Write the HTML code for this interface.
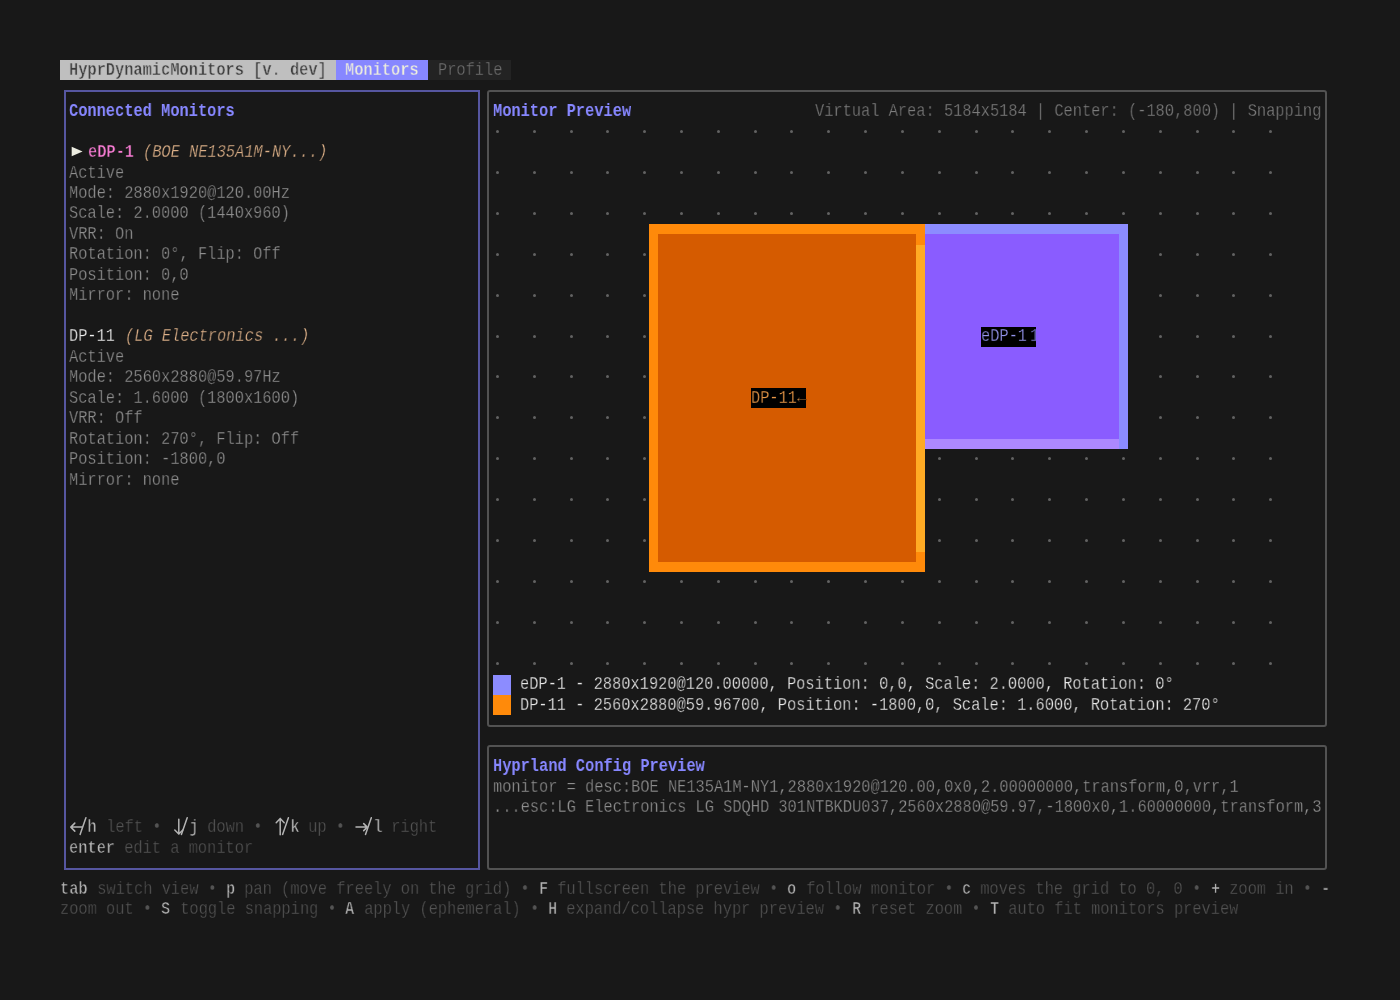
<!DOCTYPE html>
<html><head><meta charset="utf-8"><style>
html,body{margin:0;padding:0;}
body{width:1400px;height:1000px;background:#181818;position:relative;overflow:hidden;font-family:"Liberation Mono",monospace;}
.t{position:absolute;white-space:pre;font-size:19.0px;line-height:20.467px;height:20.467px;transform:scaleX(0.80741);transform-origin:0 0;will-change:transform;-webkit-text-stroke:0.3px #181818;}
</style></head><body>
<div style="position:absolute;left:60.10px;top:59.99px;width:276.18px;height:20.36px;background:#bfbfbf;"></div>
<div class="t" style="left:69.31px;top:60.20px;color:#3c3c3c;-webkit-text-stroke-color:#bfbfbf;font-weight:bold;-webkit-text-stroke-width:0;-webkit-text-stroke-width:0.5px;">HyprDynamicMonitors [v. dev]</div>
<div style="position:absolute;left:336.28px;top:59.99px;width:92.06px;height:20.36px;background:#8787ff;"></div>
<div class="t" style="left:345.49px;top:60.20px;color:#eeeedd;-webkit-text-stroke-color:#8787ff;font-weight:bold;-webkit-text-stroke-width:0;-webkit-text-stroke-width:0.4px;">Monitors</div>
<div style="position:absolute;left:428.34px;top:59.99px;width:82.85px;height:20.36px;background:#232323;"></div>
<div class="t" style="left:437.55px;top:60.20px;color:#6e6e6e;-webkit-text-stroke-color:#232323;">Profile</div>
<div style="position:absolute;left:63.70px;top:90.20px;width:416.27px;height:779.75px;border:2px solid #5656a0;box-sizing:border-box;border-radius:0px"></div>
<div class="t" style="left:69.31px;top:101.13px;color:#8787ff;font-weight:bold;-webkit-text-stroke-width:0;">Connected Monitors</div>
<svg style="position:absolute;left:0;top:0" width="100" height="170"><polygon points="71.7,146.8 71.7,156.2 82.6,151.5" fill="#ecece0"/></svg>
<div class="t" style="left:87.72px;top:142.07px;color:#fa7ed6;font-weight:bold;-webkit-text-stroke-width:0;-webkit-text-stroke-width:0.5px;">eDP-1</div>
<div class="t" style="left:142.95px;top:142.07px;color:#dcb088;font-style:italic;">(BOE NE135A1M-NY...)</div>
<div class="t" style="left:69.31px;top:162.53px;color:#8e8e8e;">Active</div>
<div class="t" style="left:69.31px;top:183.00px;color:#8e8e8e;">Mode: 2880x1920@120.00Hz</div>
<div class="t" style="left:69.31px;top:203.47px;color:#8e8e8e;">Scale: 2.0000 (1440x960)</div>
<div class="t" style="left:69.31px;top:223.94px;color:#8e8e8e;">VRR: On</div>
<div class="t" style="left:69.31px;top:244.40px;color:#8e8e8e;">Rotation: 0°, Flip: Off</div>
<div class="t" style="left:69.31px;top:264.87px;color:#8e8e8e;">Position: 0,0</div>
<div class="t" style="left:69.31px;top:285.34px;color:#8e8e8e;">Mirror: none</div>
<div class="t" style="left:69.31px;top:326.27px;color:#eeeeee;">DP-11</div>
<div class="t" style="left:124.54px;top:326.27px;color:#dcb088;font-style:italic;">(LG Electronics ...)</div>
<div class="t" style="left:69.31px;top:346.74px;color:#8e8e8e;">Active</div>
<div class="t" style="left:69.31px;top:367.20px;color:#8e8e8e;">Mode: 2560x2880@59.97Hz</div>
<div class="t" style="left:69.31px;top:387.67px;color:#8e8e8e;">Scale: 1.6000 (1800x1600)</div>
<div class="t" style="left:69.31px;top:408.14px;color:#8e8e8e;">VRR: Off</div>
<div class="t" style="left:69.31px;top:428.61px;color:#8e8e8e;">Rotation: 270°, Flip: Off</div>
<div class="t" style="left:69.31px;top:449.07px;color:#8e8e8e;">Position: -1800,0</div>
<div class="t" style="left:69.31px;top:469.54px;color:#8e8e8e;">Mirror: none</div>
<div class="t" style="left:69.31px;top:817.48px;color:#b4b4b4;font-weight:bold;-webkit-text-stroke-width:0;-webkit-text-stroke-width:0.7px;">  h</div>
<div class="t" style="left:96.92px;top:817.48px;color:#535353;"> left • </div>
<div class="t" style="left:170.57px;top:817.48px;color:#b4b4b4;font-weight:bold;-webkit-text-stroke-width:0;-webkit-text-stroke-width:0.7px;">  j</div>
<div class="t" style="left:198.19px;top:817.48px;color:#535353;"> down • </div>
<div class="t" style="left:271.84px;top:817.48px;color:#b4b4b4;font-weight:bold;-webkit-text-stroke-width:0;-webkit-text-stroke-width:0.7px;">  k</div>
<div class="t" style="left:299.46px;top:817.48px;color:#535353;"> up • </div>
<div class="t" style="left:354.69px;top:817.48px;color:#b4b4b4;font-weight:bold;-webkit-text-stroke-width:0;-webkit-text-stroke-width:0.7px;">  l</div>
<div class="t" style="left:382.31px;top:817.48px;color:#535353;"> right</div>
<svg style="position:absolute;left:0;top:0" width="1400" height="1000"><path d="M70.8 827.1 H82.3 M74.8 823.1 L70.8 827.1 L74.8 831.1" fill="none" stroke="#b4b4b4" stroke-width="1.5" stroke-linecap="round" stroke-linejoin="round"/><path d="M178.8 819.3 V834.1 M174.8 830.0 L178.8 834.1 L182.8 830.0" fill="none" stroke="#b4b4b4" stroke-width="1.5" stroke-linecap="round" stroke-linejoin="round"/><path d="M280.2 834.8 V818.6 M276.2 822.7 L280.2 818.6 L284.2 822.7" fill="none" stroke="#b4b4b4" stroke-width="1.5" stroke-linecap="round" stroke-linejoin="round"/><path d="M356.0 827.1 H367.2 M363.7 823.6 L367.2 827.1 L363.7 830.6" fill="none" stroke="#b4b4b4" stroke-width="1.5" stroke-linecap="round" stroke-linejoin="round"/><path d="M80.1 834.4 L85.9 817.8" fill="none" stroke="#b4b4b4" stroke-width="1.5" stroke-linecap="round" stroke-linejoin="round"/><path d="M181.4 834.4 L187.2 817.8" fill="none" stroke="#b4b4b4" stroke-width="1.5" stroke-linecap="round" stroke-linejoin="round"/><path d="M282.6 834.4 L288.4 817.8" fill="none" stroke="#b4b4b4" stroke-width="1.5" stroke-linecap="round" stroke-linejoin="round"/><path d="M365.5 834.4 L371.3 817.8" fill="none" stroke="#b4b4b4" stroke-width="1.5" stroke-linecap="round" stroke-linejoin="round"/></svg>
<div class="t" style="left:69.31px;top:837.95px;color:#b4b4b4;font-weight:bold;-webkit-text-stroke-width:0;-webkit-text-stroke-width:0.7px;">enter</div>
<div class="t" style="left:115.34px;top:837.95px;color:#535353;"> edit a monitor</div>
<div style="position:absolute;left:487.18px;top:90.20px;width:839.75px;height:636.48px;border:2px solid #525252;box-sizing:border-box;border-radius:3px"></div>
<div class="t" style="left:492.78px;top:101.13px;color:#8787ff;font-weight:bold;-webkit-text-stroke-width:0;">Monitor Preview</div>
<div class="t" style="left:814.99px;top:101.13px;color:#7c7c7c;">Virtual Area: 5184x5184 | Center: (-180,800) | Snapping</div>
<div style="position:absolute;left:496px;top:130px;width:3px;height:3px;border-radius:50%;background:#626262"></div>
<div style="position:absolute;left:533px;top:130px;width:3px;height:3px;border-radius:50%;background:#626262"></div>
<div style="position:absolute;left:570px;top:130px;width:3px;height:3px;border-radius:50%;background:#626262"></div>
<div style="position:absolute;left:606px;top:130px;width:3px;height:3px;border-radius:50%;background:#626262"></div>
<div style="position:absolute;left:643px;top:130px;width:3px;height:3px;border-radius:50%;background:#626262"></div>
<div style="position:absolute;left:680px;top:130px;width:3px;height:3px;border-radius:50%;background:#626262"></div>
<div style="position:absolute;left:717px;top:130px;width:3px;height:3px;border-radius:50%;background:#626262"></div>
<div style="position:absolute;left:754px;top:130px;width:3px;height:3px;border-radius:50%;background:#626262"></div>
<div style="position:absolute;left:790px;top:130px;width:3px;height:3px;border-radius:50%;background:#626262"></div>
<div style="position:absolute;left:827px;top:130px;width:3px;height:3px;border-radius:50%;background:#626262"></div>
<div style="position:absolute;left:864px;top:130px;width:3px;height:3px;border-radius:50%;background:#626262"></div>
<div style="position:absolute;left:901px;top:130px;width:3px;height:3px;border-radius:50%;background:#626262"></div>
<div style="position:absolute;left:938px;top:130px;width:3px;height:3px;border-radius:50%;background:#626262"></div>
<div style="position:absolute;left:975px;top:130px;width:3px;height:3px;border-radius:50%;background:#626262"></div>
<div style="position:absolute;left:1011px;top:130px;width:3px;height:3px;border-radius:50%;background:#626262"></div>
<div style="position:absolute;left:1048px;top:130px;width:3px;height:3px;border-radius:50%;background:#626262"></div>
<div style="position:absolute;left:1085px;top:130px;width:3px;height:3px;border-radius:50%;background:#626262"></div>
<div style="position:absolute;left:1122px;top:130px;width:3px;height:3px;border-radius:50%;background:#626262"></div>
<div style="position:absolute;left:1159px;top:130px;width:3px;height:3px;border-radius:50%;background:#626262"></div>
<div style="position:absolute;left:1196px;top:130px;width:3px;height:3px;border-radius:50%;background:#626262"></div>
<div style="position:absolute;left:1232px;top:130px;width:3px;height:3px;border-radius:50%;background:#626262"></div>
<div style="position:absolute;left:1269px;top:130px;width:3px;height:3px;border-radius:50%;background:#626262"></div>
<div style="position:absolute;left:496px;top:171px;width:3px;height:3px;border-radius:50%;background:#626262"></div>
<div style="position:absolute;left:533px;top:171px;width:3px;height:3px;border-radius:50%;background:#626262"></div>
<div style="position:absolute;left:570px;top:171px;width:3px;height:3px;border-radius:50%;background:#626262"></div>
<div style="position:absolute;left:606px;top:171px;width:3px;height:3px;border-radius:50%;background:#626262"></div>
<div style="position:absolute;left:643px;top:171px;width:3px;height:3px;border-radius:50%;background:#626262"></div>
<div style="position:absolute;left:680px;top:171px;width:3px;height:3px;border-radius:50%;background:#626262"></div>
<div style="position:absolute;left:717px;top:171px;width:3px;height:3px;border-radius:50%;background:#626262"></div>
<div style="position:absolute;left:754px;top:171px;width:3px;height:3px;border-radius:50%;background:#626262"></div>
<div style="position:absolute;left:790px;top:171px;width:3px;height:3px;border-radius:50%;background:#626262"></div>
<div style="position:absolute;left:827px;top:171px;width:3px;height:3px;border-radius:50%;background:#626262"></div>
<div style="position:absolute;left:864px;top:171px;width:3px;height:3px;border-radius:50%;background:#626262"></div>
<div style="position:absolute;left:901px;top:171px;width:3px;height:3px;border-radius:50%;background:#626262"></div>
<div style="position:absolute;left:938px;top:171px;width:3px;height:3px;border-radius:50%;background:#626262"></div>
<div style="position:absolute;left:975px;top:171px;width:3px;height:3px;border-radius:50%;background:#626262"></div>
<div style="position:absolute;left:1011px;top:171px;width:3px;height:3px;border-radius:50%;background:#626262"></div>
<div style="position:absolute;left:1048px;top:171px;width:3px;height:3px;border-radius:50%;background:#626262"></div>
<div style="position:absolute;left:1085px;top:171px;width:3px;height:3px;border-radius:50%;background:#626262"></div>
<div style="position:absolute;left:1122px;top:171px;width:3px;height:3px;border-radius:50%;background:#626262"></div>
<div style="position:absolute;left:1159px;top:171px;width:3px;height:3px;border-radius:50%;background:#626262"></div>
<div style="position:absolute;left:1196px;top:171px;width:3px;height:3px;border-radius:50%;background:#626262"></div>
<div style="position:absolute;left:1232px;top:171px;width:3px;height:3px;border-radius:50%;background:#626262"></div>
<div style="position:absolute;left:1269px;top:171px;width:3px;height:3px;border-radius:50%;background:#626262"></div>
<div style="position:absolute;left:496px;top:212px;width:3px;height:3px;border-radius:50%;background:#626262"></div>
<div style="position:absolute;left:533px;top:212px;width:3px;height:3px;border-radius:50%;background:#626262"></div>
<div style="position:absolute;left:570px;top:212px;width:3px;height:3px;border-radius:50%;background:#626262"></div>
<div style="position:absolute;left:606px;top:212px;width:3px;height:3px;border-radius:50%;background:#626262"></div>
<div style="position:absolute;left:643px;top:212px;width:3px;height:3px;border-radius:50%;background:#626262"></div>
<div style="position:absolute;left:680px;top:212px;width:3px;height:3px;border-radius:50%;background:#626262"></div>
<div style="position:absolute;left:717px;top:212px;width:3px;height:3px;border-radius:50%;background:#626262"></div>
<div style="position:absolute;left:754px;top:212px;width:3px;height:3px;border-radius:50%;background:#626262"></div>
<div style="position:absolute;left:790px;top:212px;width:3px;height:3px;border-radius:50%;background:#626262"></div>
<div style="position:absolute;left:827px;top:212px;width:3px;height:3px;border-radius:50%;background:#626262"></div>
<div style="position:absolute;left:864px;top:212px;width:3px;height:3px;border-radius:50%;background:#626262"></div>
<div style="position:absolute;left:901px;top:212px;width:3px;height:3px;border-radius:50%;background:#626262"></div>
<div style="position:absolute;left:938px;top:212px;width:3px;height:3px;border-radius:50%;background:#626262"></div>
<div style="position:absolute;left:975px;top:212px;width:3px;height:3px;border-radius:50%;background:#626262"></div>
<div style="position:absolute;left:1011px;top:212px;width:3px;height:3px;border-radius:50%;background:#626262"></div>
<div style="position:absolute;left:1048px;top:212px;width:3px;height:3px;border-radius:50%;background:#626262"></div>
<div style="position:absolute;left:1085px;top:212px;width:3px;height:3px;border-radius:50%;background:#626262"></div>
<div style="position:absolute;left:1122px;top:212px;width:3px;height:3px;border-radius:50%;background:#626262"></div>
<div style="position:absolute;left:1159px;top:212px;width:3px;height:3px;border-radius:50%;background:#626262"></div>
<div style="position:absolute;left:1196px;top:212px;width:3px;height:3px;border-radius:50%;background:#626262"></div>
<div style="position:absolute;left:1232px;top:212px;width:3px;height:3px;border-radius:50%;background:#626262"></div>
<div style="position:absolute;left:1269px;top:212px;width:3px;height:3px;border-radius:50%;background:#626262"></div>
<div style="position:absolute;left:496px;top:253px;width:3px;height:3px;border-radius:50%;background:#626262"></div>
<div style="position:absolute;left:533px;top:253px;width:3px;height:3px;border-radius:50%;background:#626262"></div>
<div style="position:absolute;left:570px;top:253px;width:3px;height:3px;border-radius:50%;background:#626262"></div>
<div style="position:absolute;left:606px;top:253px;width:3px;height:3px;border-radius:50%;background:#626262"></div>
<div style="position:absolute;left:643px;top:253px;width:3px;height:3px;border-radius:50%;background:#626262"></div>
<div style="position:absolute;left:680px;top:253px;width:3px;height:3px;border-radius:50%;background:#626262"></div>
<div style="position:absolute;left:717px;top:253px;width:3px;height:3px;border-radius:50%;background:#626262"></div>
<div style="position:absolute;left:754px;top:253px;width:3px;height:3px;border-radius:50%;background:#626262"></div>
<div style="position:absolute;left:790px;top:253px;width:3px;height:3px;border-radius:50%;background:#626262"></div>
<div style="position:absolute;left:827px;top:253px;width:3px;height:3px;border-radius:50%;background:#626262"></div>
<div style="position:absolute;left:864px;top:253px;width:3px;height:3px;border-radius:50%;background:#626262"></div>
<div style="position:absolute;left:901px;top:253px;width:3px;height:3px;border-radius:50%;background:#626262"></div>
<div style="position:absolute;left:938px;top:253px;width:3px;height:3px;border-radius:50%;background:#626262"></div>
<div style="position:absolute;left:975px;top:253px;width:3px;height:3px;border-radius:50%;background:#626262"></div>
<div style="position:absolute;left:1011px;top:253px;width:3px;height:3px;border-radius:50%;background:#626262"></div>
<div style="position:absolute;left:1048px;top:253px;width:3px;height:3px;border-radius:50%;background:#626262"></div>
<div style="position:absolute;left:1085px;top:253px;width:3px;height:3px;border-radius:50%;background:#626262"></div>
<div style="position:absolute;left:1122px;top:253px;width:3px;height:3px;border-radius:50%;background:#626262"></div>
<div style="position:absolute;left:1159px;top:253px;width:3px;height:3px;border-radius:50%;background:#626262"></div>
<div style="position:absolute;left:1196px;top:253px;width:3px;height:3px;border-radius:50%;background:#626262"></div>
<div style="position:absolute;left:1232px;top:253px;width:3px;height:3px;border-radius:50%;background:#626262"></div>
<div style="position:absolute;left:1269px;top:253px;width:3px;height:3px;border-radius:50%;background:#626262"></div>
<div style="position:absolute;left:496px;top:294px;width:3px;height:3px;border-radius:50%;background:#626262"></div>
<div style="position:absolute;left:533px;top:294px;width:3px;height:3px;border-radius:50%;background:#626262"></div>
<div style="position:absolute;left:570px;top:294px;width:3px;height:3px;border-radius:50%;background:#626262"></div>
<div style="position:absolute;left:606px;top:294px;width:3px;height:3px;border-radius:50%;background:#626262"></div>
<div style="position:absolute;left:643px;top:294px;width:3px;height:3px;border-radius:50%;background:#626262"></div>
<div style="position:absolute;left:680px;top:294px;width:3px;height:3px;border-radius:50%;background:#626262"></div>
<div style="position:absolute;left:717px;top:294px;width:3px;height:3px;border-radius:50%;background:#626262"></div>
<div style="position:absolute;left:754px;top:294px;width:3px;height:3px;border-radius:50%;background:#626262"></div>
<div style="position:absolute;left:790px;top:294px;width:3px;height:3px;border-radius:50%;background:#626262"></div>
<div style="position:absolute;left:827px;top:294px;width:3px;height:3px;border-radius:50%;background:#626262"></div>
<div style="position:absolute;left:864px;top:294px;width:3px;height:3px;border-radius:50%;background:#626262"></div>
<div style="position:absolute;left:901px;top:294px;width:3px;height:3px;border-radius:50%;background:#626262"></div>
<div style="position:absolute;left:938px;top:294px;width:3px;height:3px;border-radius:50%;background:#626262"></div>
<div style="position:absolute;left:975px;top:294px;width:3px;height:3px;border-radius:50%;background:#626262"></div>
<div style="position:absolute;left:1011px;top:294px;width:3px;height:3px;border-radius:50%;background:#626262"></div>
<div style="position:absolute;left:1048px;top:294px;width:3px;height:3px;border-radius:50%;background:#626262"></div>
<div style="position:absolute;left:1085px;top:294px;width:3px;height:3px;border-radius:50%;background:#626262"></div>
<div style="position:absolute;left:1122px;top:294px;width:3px;height:3px;border-radius:50%;background:#626262"></div>
<div style="position:absolute;left:1159px;top:294px;width:3px;height:3px;border-radius:50%;background:#626262"></div>
<div style="position:absolute;left:1196px;top:294px;width:3px;height:3px;border-radius:50%;background:#626262"></div>
<div style="position:absolute;left:1232px;top:294px;width:3px;height:3px;border-radius:50%;background:#626262"></div>
<div style="position:absolute;left:1269px;top:294px;width:3px;height:3px;border-radius:50%;background:#626262"></div>
<div style="position:absolute;left:496px;top:335px;width:3px;height:3px;border-radius:50%;background:#626262"></div>
<div style="position:absolute;left:533px;top:335px;width:3px;height:3px;border-radius:50%;background:#626262"></div>
<div style="position:absolute;left:570px;top:335px;width:3px;height:3px;border-radius:50%;background:#626262"></div>
<div style="position:absolute;left:606px;top:335px;width:3px;height:3px;border-radius:50%;background:#626262"></div>
<div style="position:absolute;left:643px;top:335px;width:3px;height:3px;border-radius:50%;background:#626262"></div>
<div style="position:absolute;left:680px;top:335px;width:3px;height:3px;border-radius:50%;background:#626262"></div>
<div style="position:absolute;left:717px;top:335px;width:3px;height:3px;border-radius:50%;background:#626262"></div>
<div style="position:absolute;left:754px;top:335px;width:3px;height:3px;border-radius:50%;background:#626262"></div>
<div style="position:absolute;left:790px;top:335px;width:3px;height:3px;border-radius:50%;background:#626262"></div>
<div style="position:absolute;left:827px;top:335px;width:3px;height:3px;border-radius:50%;background:#626262"></div>
<div style="position:absolute;left:864px;top:335px;width:3px;height:3px;border-radius:50%;background:#626262"></div>
<div style="position:absolute;left:901px;top:335px;width:3px;height:3px;border-radius:50%;background:#626262"></div>
<div style="position:absolute;left:938px;top:335px;width:3px;height:3px;border-radius:50%;background:#626262"></div>
<div style="position:absolute;left:975px;top:335px;width:3px;height:3px;border-radius:50%;background:#626262"></div>
<div style="position:absolute;left:1011px;top:335px;width:3px;height:3px;border-radius:50%;background:#626262"></div>
<div style="position:absolute;left:1048px;top:335px;width:3px;height:3px;border-radius:50%;background:#626262"></div>
<div style="position:absolute;left:1085px;top:335px;width:3px;height:3px;border-radius:50%;background:#626262"></div>
<div style="position:absolute;left:1122px;top:335px;width:3px;height:3px;border-radius:50%;background:#626262"></div>
<div style="position:absolute;left:1159px;top:335px;width:3px;height:3px;border-radius:50%;background:#626262"></div>
<div style="position:absolute;left:1196px;top:335px;width:3px;height:3px;border-radius:50%;background:#626262"></div>
<div style="position:absolute;left:1232px;top:335px;width:3px;height:3px;border-radius:50%;background:#626262"></div>
<div style="position:absolute;left:1269px;top:335px;width:3px;height:3px;border-radius:50%;background:#626262"></div>
<div style="position:absolute;left:496px;top:375px;width:3px;height:3px;border-radius:50%;background:#626262"></div>
<div style="position:absolute;left:533px;top:375px;width:3px;height:3px;border-radius:50%;background:#626262"></div>
<div style="position:absolute;left:570px;top:375px;width:3px;height:3px;border-radius:50%;background:#626262"></div>
<div style="position:absolute;left:606px;top:375px;width:3px;height:3px;border-radius:50%;background:#626262"></div>
<div style="position:absolute;left:643px;top:375px;width:3px;height:3px;border-radius:50%;background:#626262"></div>
<div style="position:absolute;left:680px;top:375px;width:3px;height:3px;border-radius:50%;background:#626262"></div>
<div style="position:absolute;left:717px;top:375px;width:3px;height:3px;border-radius:50%;background:#626262"></div>
<div style="position:absolute;left:754px;top:375px;width:3px;height:3px;border-radius:50%;background:#626262"></div>
<div style="position:absolute;left:790px;top:375px;width:3px;height:3px;border-radius:50%;background:#626262"></div>
<div style="position:absolute;left:827px;top:375px;width:3px;height:3px;border-radius:50%;background:#626262"></div>
<div style="position:absolute;left:864px;top:375px;width:3px;height:3px;border-radius:50%;background:#626262"></div>
<div style="position:absolute;left:901px;top:375px;width:3px;height:3px;border-radius:50%;background:#626262"></div>
<div style="position:absolute;left:938px;top:375px;width:3px;height:3px;border-radius:50%;background:#626262"></div>
<div style="position:absolute;left:975px;top:375px;width:3px;height:3px;border-radius:50%;background:#626262"></div>
<div style="position:absolute;left:1011px;top:375px;width:3px;height:3px;border-radius:50%;background:#626262"></div>
<div style="position:absolute;left:1048px;top:375px;width:3px;height:3px;border-radius:50%;background:#626262"></div>
<div style="position:absolute;left:1085px;top:375px;width:3px;height:3px;border-radius:50%;background:#626262"></div>
<div style="position:absolute;left:1122px;top:375px;width:3px;height:3px;border-radius:50%;background:#626262"></div>
<div style="position:absolute;left:1159px;top:375px;width:3px;height:3px;border-radius:50%;background:#626262"></div>
<div style="position:absolute;left:1196px;top:375px;width:3px;height:3px;border-radius:50%;background:#626262"></div>
<div style="position:absolute;left:1232px;top:375px;width:3px;height:3px;border-radius:50%;background:#626262"></div>
<div style="position:absolute;left:1269px;top:375px;width:3px;height:3px;border-radius:50%;background:#626262"></div>
<div style="position:absolute;left:496px;top:416px;width:3px;height:3px;border-radius:50%;background:#626262"></div>
<div style="position:absolute;left:533px;top:416px;width:3px;height:3px;border-radius:50%;background:#626262"></div>
<div style="position:absolute;left:570px;top:416px;width:3px;height:3px;border-radius:50%;background:#626262"></div>
<div style="position:absolute;left:606px;top:416px;width:3px;height:3px;border-radius:50%;background:#626262"></div>
<div style="position:absolute;left:643px;top:416px;width:3px;height:3px;border-radius:50%;background:#626262"></div>
<div style="position:absolute;left:680px;top:416px;width:3px;height:3px;border-radius:50%;background:#626262"></div>
<div style="position:absolute;left:717px;top:416px;width:3px;height:3px;border-radius:50%;background:#626262"></div>
<div style="position:absolute;left:754px;top:416px;width:3px;height:3px;border-radius:50%;background:#626262"></div>
<div style="position:absolute;left:790px;top:416px;width:3px;height:3px;border-radius:50%;background:#626262"></div>
<div style="position:absolute;left:827px;top:416px;width:3px;height:3px;border-radius:50%;background:#626262"></div>
<div style="position:absolute;left:864px;top:416px;width:3px;height:3px;border-radius:50%;background:#626262"></div>
<div style="position:absolute;left:901px;top:416px;width:3px;height:3px;border-radius:50%;background:#626262"></div>
<div style="position:absolute;left:938px;top:416px;width:3px;height:3px;border-radius:50%;background:#626262"></div>
<div style="position:absolute;left:975px;top:416px;width:3px;height:3px;border-radius:50%;background:#626262"></div>
<div style="position:absolute;left:1011px;top:416px;width:3px;height:3px;border-radius:50%;background:#626262"></div>
<div style="position:absolute;left:1048px;top:416px;width:3px;height:3px;border-radius:50%;background:#626262"></div>
<div style="position:absolute;left:1085px;top:416px;width:3px;height:3px;border-radius:50%;background:#626262"></div>
<div style="position:absolute;left:1122px;top:416px;width:3px;height:3px;border-radius:50%;background:#626262"></div>
<div style="position:absolute;left:1159px;top:416px;width:3px;height:3px;border-radius:50%;background:#626262"></div>
<div style="position:absolute;left:1196px;top:416px;width:3px;height:3px;border-radius:50%;background:#626262"></div>
<div style="position:absolute;left:1232px;top:416px;width:3px;height:3px;border-radius:50%;background:#626262"></div>
<div style="position:absolute;left:1269px;top:416px;width:3px;height:3px;border-radius:50%;background:#626262"></div>
<div style="position:absolute;left:496px;top:457px;width:3px;height:3px;border-radius:50%;background:#626262"></div>
<div style="position:absolute;left:533px;top:457px;width:3px;height:3px;border-radius:50%;background:#626262"></div>
<div style="position:absolute;left:570px;top:457px;width:3px;height:3px;border-radius:50%;background:#626262"></div>
<div style="position:absolute;left:606px;top:457px;width:3px;height:3px;border-radius:50%;background:#626262"></div>
<div style="position:absolute;left:643px;top:457px;width:3px;height:3px;border-radius:50%;background:#626262"></div>
<div style="position:absolute;left:680px;top:457px;width:3px;height:3px;border-radius:50%;background:#626262"></div>
<div style="position:absolute;left:717px;top:457px;width:3px;height:3px;border-radius:50%;background:#626262"></div>
<div style="position:absolute;left:754px;top:457px;width:3px;height:3px;border-radius:50%;background:#626262"></div>
<div style="position:absolute;left:790px;top:457px;width:3px;height:3px;border-radius:50%;background:#626262"></div>
<div style="position:absolute;left:827px;top:457px;width:3px;height:3px;border-radius:50%;background:#626262"></div>
<div style="position:absolute;left:864px;top:457px;width:3px;height:3px;border-radius:50%;background:#626262"></div>
<div style="position:absolute;left:901px;top:457px;width:3px;height:3px;border-radius:50%;background:#626262"></div>
<div style="position:absolute;left:938px;top:457px;width:3px;height:3px;border-radius:50%;background:#626262"></div>
<div style="position:absolute;left:975px;top:457px;width:3px;height:3px;border-radius:50%;background:#626262"></div>
<div style="position:absolute;left:1011px;top:457px;width:3px;height:3px;border-radius:50%;background:#626262"></div>
<div style="position:absolute;left:1048px;top:457px;width:3px;height:3px;border-radius:50%;background:#626262"></div>
<div style="position:absolute;left:1085px;top:457px;width:3px;height:3px;border-radius:50%;background:#626262"></div>
<div style="position:absolute;left:1122px;top:457px;width:3px;height:3px;border-radius:50%;background:#626262"></div>
<div style="position:absolute;left:1159px;top:457px;width:3px;height:3px;border-radius:50%;background:#626262"></div>
<div style="position:absolute;left:1196px;top:457px;width:3px;height:3px;border-radius:50%;background:#626262"></div>
<div style="position:absolute;left:1232px;top:457px;width:3px;height:3px;border-radius:50%;background:#626262"></div>
<div style="position:absolute;left:1269px;top:457px;width:3px;height:3px;border-radius:50%;background:#626262"></div>
<div style="position:absolute;left:496px;top:498px;width:3px;height:3px;border-radius:50%;background:#626262"></div>
<div style="position:absolute;left:533px;top:498px;width:3px;height:3px;border-radius:50%;background:#626262"></div>
<div style="position:absolute;left:570px;top:498px;width:3px;height:3px;border-radius:50%;background:#626262"></div>
<div style="position:absolute;left:606px;top:498px;width:3px;height:3px;border-radius:50%;background:#626262"></div>
<div style="position:absolute;left:643px;top:498px;width:3px;height:3px;border-radius:50%;background:#626262"></div>
<div style="position:absolute;left:680px;top:498px;width:3px;height:3px;border-radius:50%;background:#626262"></div>
<div style="position:absolute;left:717px;top:498px;width:3px;height:3px;border-radius:50%;background:#626262"></div>
<div style="position:absolute;left:754px;top:498px;width:3px;height:3px;border-radius:50%;background:#626262"></div>
<div style="position:absolute;left:790px;top:498px;width:3px;height:3px;border-radius:50%;background:#626262"></div>
<div style="position:absolute;left:827px;top:498px;width:3px;height:3px;border-radius:50%;background:#626262"></div>
<div style="position:absolute;left:864px;top:498px;width:3px;height:3px;border-radius:50%;background:#626262"></div>
<div style="position:absolute;left:901px;top:498px;width:3px;height:3px;border-radius:50%;background:#626262"></div>
<div style="position:absolute;left:938px;top:498px;width:3px;height:3px;border-radius:50%;background:#626262"></div>
<div style="position:absolute;left:975px;top:498px;width:3px;height:3px;border-radius:50%;background:#626262"></div>
<div style="position:absolute;left:1011px;top:498px;width:3px;height:3px;border-radius:50%;background:#626262"></div>
<div style="position:absolute;left:1048px;top:498px;width:3px;height:3px;border-radius:50%;background:#626262"></div>
<div style="position:absolute;left:1085px;top:498px;width:3px;height:3px;border-radius:50%;background:#626262"></div>
<div style="position:absolute;left:1122px;top:498px;width:3px;height:3px;border-radius:50%;background:#626262"></div>
<div style="position:absolute;left:1159px;top:498px;width:3px;height:3px;border-radius:50%;background:#626262"></div>
<div style="position:absolute;left:1196px;top:498px;width:3px;height:3px;border-radius:50%;background:#626262"></div>
<div style="position:absolute;left:1232px;top:498px;width:3px;height:3px;border-radius:50%;background:#626262"></div>
<div style="position:absolute;left:1269px;top:498px;width:3px;height:3px;border-radius:50%;background:#626262"></div>
<div style="position:absolute;left:496px;top:539px;width:3px;height:3px;border-radius:50%;background:#626262"></div>
<div style="position:absolute;left:533px;top:539px;width:3px;height:3px;border-radius:50%;background:#626262"></div>
<div style="position:absolute;left:570px;top:539px;width:3px;height:3px;border-radius:50%;background:#626262"></div>
<div style="position:absolute;left:606px;top:539px;width:3px;height:3px;border-radius:50%;background:#626262"></div>
<div style="position:absolute;left:643px;top:539px;width:3px;height:3px;border-radius:50%;background:#626262"></div>
<div style="position:absolute;left:680px;top:539px;width:3px;height:3px;border-radius:50%;background:#626262"></div>
<div style="position:absolute;left:717px;top:539px;width:3px;height:3px;border-radius:50%;background:#626262"></div>
<div style="position:absolute;left:754px;top:539px;width:3px;height:3px;border-radius:50%;background:#626262"></div>
<div style="position:absolute;left:790px;top:539px;width:3px;height:3px;border-radius:50%;background:#626262"></div>
<div style="position:absolute;left:827px;top:539px;width:3px;height:3px;border-radius:50%;background:#626262"></div>
<div style="position:absolute;left:864px;top:539px;width:3px;height:3px;border-radius:50%;background:#626262"></div>
<div style="position:absolute;left:901px;top:539px;width:3px;height:3px;border-radius:50%;background:#626262"></div>
<div style="position:absolute;left:938px;top:539px;width:3px;height:3px;border-radius:50%;background:#626262"></div>
<div style="position:absolute;left:975px;top:539px;width:3px;height:3px;border-radius:50%;background:#626262"></div>
<div style="position:absolute;left:1011px;top:539px;width:3px;height:3px;border-radius:50%;background:#626262"></div>
<div style="position:absolute;left:1048px;top:539px;width:3px;height:3px;border-radius:50%;background:#626262"></div>
<div style="position:absolute;left:1085px;top:539px;width:3px;height:3px;border-radius:50%;background:#626262"></div>
<div style="position:absolute;left:1122px;top:539px;width:3px;height:3px;border-radius:50%;background:#626262"></div>
<div style="position:absolute;left:1159px;top:539px;width:3px;height:3px;border-radius:50%;background:#626262"></div>
<div style="position:absolute;left:1196px;top:539px;width:3px;height:3px;border-radius:50%;background:#626262"></div>
<div style="position:absolute;left:1232px;top:539px;width:3px;height:3px;border-radius:50%;background:#626262"></div>
<div style="position:absolute;left:1269px;top:539px;width:3px;height:3px;border-radius:50%;background:#626262"></div>
<div style="position:absolute;left:496px;top:580px;width:3px;height:3px;border-radius:50%;background:#626262"></div>
<div style="position:absolute;left:533px;top:580px;width:3px;height:3px;border-radius:50%;background:#626262"></div>
<div style="position:absolute;left:570px;top:580px;width:3px;height:3px;border-radius:50%;background:#626262"></div>
<div style="position:absolute;left:606px;top:580px;width:3px;height:3px;border-radius:50%;background:#626262"></div>
<div style="position:absolute;left:643px;top:580px;width:3px;height:3px;border-radius:50%;background:#626262"></div>
<div style="position:absolute;left:680px;top:580px;width:3px;height:3px;border-radius:50%;background:#626262"></div>
<div style="position:absolute;left:717px;top:580px;width:3px;height:3px;border-radius:50%;background:#626262"></div>
<div style="position:absolute;left:754px;top:580px;width:3px;height:3px;border-radius:50%;background:#626262"></div>
<div style="position:absolute;left:790px;top:580px;width:3px;height:3px;border-radius:50%;background:#626262"></div>
<div style="position:absolute;left:827px;top:580px;width:3px;height:3px;border-radius:50%;background:#626262"></div>
<div style="position:absolute;left:864px;top:580px;width:3px;height:3px;border-radius:50%;background:#626262"></div>
<div style="position:absolute;left:901px;top:580px;width:3px;height:3px;border-radius:50%;background:#626262"></div>
<div style="position:absolute;left:938px;top:580px;width:3px;height:3px;border-radius:50%;background:#626262"></div>
<div style="position:absolute;left:975px;top:580px;width:3px;height:3px;border-radius:50%;background:#626262"></div>
<div style="position:absolute;left:1011px;top:580px;width:3px;height:3px;border-radius:50%;background:#626262"></div>
<div style="position:absolute;left:1048px;top:580px;width:3px;height:3px;border-radius:50%;background:#626262"></div>
<div style="position:absolute;left:1085px;top:580px;width:3px;height:3px;border-radius:50%;background:#626262"></div>
<div style="position:absolute;left:1122px;top:580px;width:3px;height:3px;border-radius:50%;background:#626262"></div>
<div style="position:absolute;left:1159px;top:580px;width:3px;height:3px;border-radius:50%;background:#626262"></div>
<div style="position:absolute;left:1196px;top:580px;width:3px;height:3px;border-radius:50%;background:#626262"></div>
<div style="position:absolute;left:1232px;top:580px;width:3px;height:3px;border-radius:50%;background:#626262"></div>
<div style="position:absolute;left:1269px;top:580px;width:3px;height:3px;border-radius:50%;background:#626262"></div>
<div style="position:absolute;left:496px;top:621px;width:3px;height:3px;border-radius:50%;background:#626262"></div>
<div style="position:absolute;left:533px;top:621px;width:3px;height:3px;border-radius:50%;background:#626262"></div>
<div style="position:absolute;left:570px;top:621px;width:3px;height:3px;border-radius:50%;background:#626262"></div>
<div style="position:absolute;left:606px;top:621px;width:3px;height:3px;border-radius:50%;background:#626262"></div>
<div style="position:absolute;left:643px;top:621px;width:3px;height:3px;border-radius:50%;background:#626262"></div>
<div style="position:absolute;left:680px;top:621px;width:3px;height:3px;border-radius:50%;background:#626262"></div>
<div style="position:absolute;left:717px;top:621px;width:3px;height:3px;border-radius:50%;background:#626262"></div>
<div style="position:absolute;left:754px;top:621px;width:3px;height:3px;border-radius:50%;background:#626262"></div>
<div style="position:absolute;left:790px;top:621px;width:3px;height:3px;border-radius:50%;background:#626262"></div>
<div style="position:absolute;left:827px;top:621px;width:3px;height:3px;border-radius:50%;background:#626262"></div>
<div style="position:absolute;left:864px;top:621px;width:3px;height:3px;border-radius:50%;background:#626262"></div>
<div style="position:absolute;left:901px;top:621px;width:3px;height:3px;border-radius:50%;background:#626262"></div>
<div style="position:absolute;left:938px;top:621px;width:3px;height:3px;border-radius:50%;background:#626262"></div>
<div style="position:absolute;left:975px;top:621px;width:3px;height:3px;border-radius:50%;background:#626262"></div>
<div style="position:absolute;left:1011px;top:621px;width:3px;height:3px;border-radius:50%;background:#626262"></div>
<div style="position:absolute;left:1048px;top:621px;width:3px;height:3px;border-radius:50%;background:#626262"></div>
<div style="position:absolute;left:1085px;top:621px;width:3px;height:3px;border-radius:50%;background:#626262"></div>
<div style="position:absolute;left:1122px;top:621px;width:3px;height:3px;border-radius:50%;background:#626262"></div>
<div style="position:absolute;left:1159px;top:621px;width:3px;height:3px;border-radius:50%;background:#626262"></div>
<div style="position:absolute;left:1196px;top:621px;width:3px;height:3px;border-radius:50%;background:#626262"></div>
<div style="position:absolute;left:1232px;top:621px;width:3px;height:3px;border-radius:50%;background:#626262"></div>
<div style="position:absolute;left:1269px;top:621px;width:3px;height:3px;border-radius:50%;background:#626262"></div>
<div style="position:absolute;left:496px;top:662px;width:3px;height:3px;border-radius:50%;background:#626262"></div>
<div style="position:absolute;left:533px;top:662px;width:3px;height:3px;border-radius:50%;background:#626262"></div>
<div style="position:absolute;left:570px;top:662px;width:3px;height:3px;border-radius:50%;background:#626262"></div>
<div style="position:absolute;left:606px;top:662px;width:3px;height:3px;border-radius:50%;background:#626262"></div>
<div style="position:absolute;left:643px;top:662px;width:3px;height:3px;border-radius:50%;background:#626262"></div>
<div style="position:absolute;left:680px;top:662px;width:3px;height:3px;border-radius:50%;background:#626262"></div>
<div style="position:absolute;left:717px;top:662px;width:3px;height:3px;border-radius:50%;background:#626262"></div>
<div style="position:absolute;left:754px;top:662px;width:3px;height:3px;border-radius:50%;background:#626262"></div>
<div style="position:absolute;left:790px;top:662px;width:3px;height:3px;border-radius:50%;background:#626262"></div>
<div style="position:absolute;left:827px;top:662px;width:3px;height:3px;border-radius:50%;background:#626262"></div>
<div style="position:absolute;left:864px;top:662px;width:3px;height:3px;border-radius:50%;background:#626262"></div>
<div style="position:absolute;left:901px;top:662px;width:3px;height:3px;border-radius:50%;background:#626262"></div>
<div style="position:absolute;left:938px;top:662px;width:3px;height:3px;border-radius:50%;background:#626262"></div>
<div style="position:absolute;left:975px;top:662px;width:3px;height:3px;border-radius:50%;background:#626262"></div>
<div style="position:absolute;left:1011px;top:662px;width:3px;height:3px;border-radius:50%;background:#626262"></div>
<div style="position:absolute;left:1048px;top:662px;width:3px;height:3px;border-radius:50%;background:#626262"></div>
<div style="position:absolute;left:1085px;top:662px;width:3px;height:3px;border-radius:50%;background:#626262"></div>
<div style="position:absolute;left:1122px;top:662px;width:3px;height:3px;border-radius:50%;background:#626262"></div>
<div style="position:absolute;left:1159px;top:662px;width:3px;height:3px;border-radius:50%;background:#626262"></div>
<div style="position:absolute;left:1196px;top:662px;width:3px;height:3px;border-radius:50%;background:#626262"></div>
<div style="position:absolute;left:1232px;top:662px;width:3px;height:3px;border-radius:50%;background:#626262"></div>
<div style="position:absolute;left:1269px;top:662px;width:3px;height:3px;border-radius:50%;background:#626262"></div>
<div style="position:absolute;left:649.28px;top:224.24px;width:276.18px;height:347.94px;background:#ff8a0a;"></div>
<div style="position:absolute;left:658.49px;top:234.47px;width:257.77px;height:327.47px;background:#d55b00;"></div>
<div style="position:absolute;left:916.26px;top:244.70px;width:9.21px;height:307.00px;background:#ffab24;"></div>
<div style="position:absolute;left:925.46px;top:224.24px;width:202.53px;height:225.14px;background:#8c8cff;"></div>
<div style="position:absolute;left:925.46px;top:234.47px;width:193.33px;height:204.67px;background:#8a5cff;"></div>
<div style="position:absolute;left:925.46px;top:439.14px;width:193.33px;height:10.23px;background:#ad88ff;"></div>
<div style="position:absolute;left:750.55px;top:387.97px;width:55.24px;height:20.47px;background:#000000;"></div>
<div class="t" style="left:750.55px;top:387.67px;color:#e89848;-webkit-text-stroke-color:#000000;">DP-11←</div>
<div style="position:absolute;left:980.70px;top:326.57px;width:55.24px;height:20.47px;background:#000000;"></div>
<div class="t" style="left:980.70px;top:326.27px;color:#9494ec;-webkit-text-stroke-color:#000000;">eDP-1</div>
<div style="position:absolute;left:1026.73px;top:326.57px;width:9.21px;height:20.47px;overflow:hidden"><div class="t" style="left:3px;top:-0.3px;color:#7070c0">1</div></div>
<div style="position:absolute;left:492.78px;top:674.51px;width:18.41px;height:20.47px;background:#8c8cff;"></div>
<div style="position:absolute;left:492.78px;top:694.98px;width:18.41px;height:20.47px;background:#ff8a0a;"></div>
<div class="t" style="left:520.40px;top:674.21px;color:#e8e8e8;">eDP-1 - 2880x1920@120.00000, Position: 0,0, Scale: 2.0000, Rotation: 0°</div>
<div class="t" style="left:520.40px;top:694.68px;color:#e8e8e8;">DP-11 - 2560x2880@59.96700, Position: -1800,0, Scale: 1.6000, Rotation: 270°</div>
<div style="position:absolute;left:487.18px;top:745.14px;width:839.75px;height:124.80px;border:2px solid #525252;box-sizing:border-box;border-radius:3px"></div>
<div class="t" style="left:492.78px;top:756.08px;color:#8787ff;font-weight:bold;-webkit-text-stroke-width:0;">Hyprland Config Preview</div>
<div class="t" style="left:492.78px;top:776.54px;color:#8e8e8e;">monitor = desc:BOE NE135A1M-NY1,2880x1920@120.00,0x0,2.00000000,transform,0,vrr,1</div>
<div class="t" style="left:492.78px;top:797.01px;color:#8e8e8e;">...esc:LG Electronics LG SDQHD 301NTBKDU037,2560x2880@59.97,-1800x0,1.60000000,transform,3</div>
<div class="t" style="left:60.10px;top:878.88px;color:#b4b4b4;font-weight:bold;-webkit-text-stroke-width:0;-webkit-text-stroke-width:0.7px;">tab</div>
<div class="t" style="left:87.72px;top:878.88px;color:#535353;"> switch view • </div>
<div class="t" style="left:225.81px;top:878.88px;color:#b4b4b4;font-weight:bold;-webkit-text-stroke-width:0;-webkit-text-stroke-width:0.7px;">p</div>
<div class="t" style="left:235.01px;top:878.88px;color:#535353;"> pan (move freely on the grid) • </div>
<div class="t" style="left:538.81px;top:878.88px;color:#b4b4b4;font-weight:bold;-webkit-text-stroke-width:0;-webkit-text-stroke-width:0.7px;">F</div>
<div class="t" style="left:548.02px;top:878.88px;color:#535353;"> fullscreen the preview • </div>
<div class="t" style="left:787.37px;top:878.88px;color:#b4b4b4;font-weight:bold;-webkit-text-stroke-width:0;-webkit-text-stroke-width:0.7px;">o</div>
<div class="t" style="left:796.58px;top:878.88px;color:#535353;"> follow monitor • </div>
<div class="t" style="left:962.29px;top:878.88px;color:#b4b4b4;font-weight:bold;-webkit-text-stroke-width:0;-webkit-text-stroke-width:0.7px;">c</div>
<div class="t" style="left:971.49px;top:878.88px;color:#535353;"> moves the grid to 0, 0 • </div>
<div class="t" style="left:1210.85px;top:878.88px;color:#b4b4b4;font-weight:bold;-webkit-text-stroke-width:0;-webkit-text-stroke-width:0.7px;">+</div>
<div class="t" style="left:1220.06px;top:878.88px;color:#535353;"> zoom in • </div>
<div class="t" style="left:1321.32px;top:878.88px;color:#b4b4b4;font-weight:bold;-webkit-text-stroke-width:0;-webkit-text-stroke-width:0.7px;">-</div>
<div class="t" style="left:60.10px;top:899.35px;color:#535353;">zoom out • </div>
<div class="t" style="left:161.37px;top:899.35px;color:#b4b4b4;font-weight:bold;-webkit-text-stroke-width:0;-webkit-text-stroke-width:0.7px;">S</div>
<div class="t" style="left:170.57px;top:899.35px;color:#535353;"> toggle snapping • </div>
<div class="t" style="left:345.49px;top:899.35px;color:#b4b4b4;font-weight:bold;-webkit-text-stroke-width:0;-webkit-text-stroke-width:0.7px;">A</div>
<div class="t" style="left:354.69px;top:899.35px;color:#535353;"> apply (ephemeral) • </div>
<div class="t" style="left:548.02px;top:899.35px;color:#b4b4b4;font-weight:bold;-webkit-text-stroke-width:0;-webkit-text-stroke-width:0.7px;">H</div>
<div class="t" style="left:557.22px;top:899.35px;color:#535353;"> expand/collapse hypr preview • </div>
<div class="t" style="left:851.82px;top:899.35px;color:#b4b4b4;font-weight:bold;-webkit-text-stroke-width:0;-webkit-text-stroke-width:0.7px;">R</div>
<div class="t" style="left:861.02px;top:899.35px;color:#535353;"> reset zoom • </div>
<div class="t" style="left:989.91px;top:899.35px;color:#b4b4b4;font-weight:bold;-webkit-text-stroke-width:0;-webkit-text-stroke-width:0.7px;">T</div>
<div class="t" style="left:999.11px;top:899.35px;color:#535353;"> auto fit monitors preview</div>
</body></html>
